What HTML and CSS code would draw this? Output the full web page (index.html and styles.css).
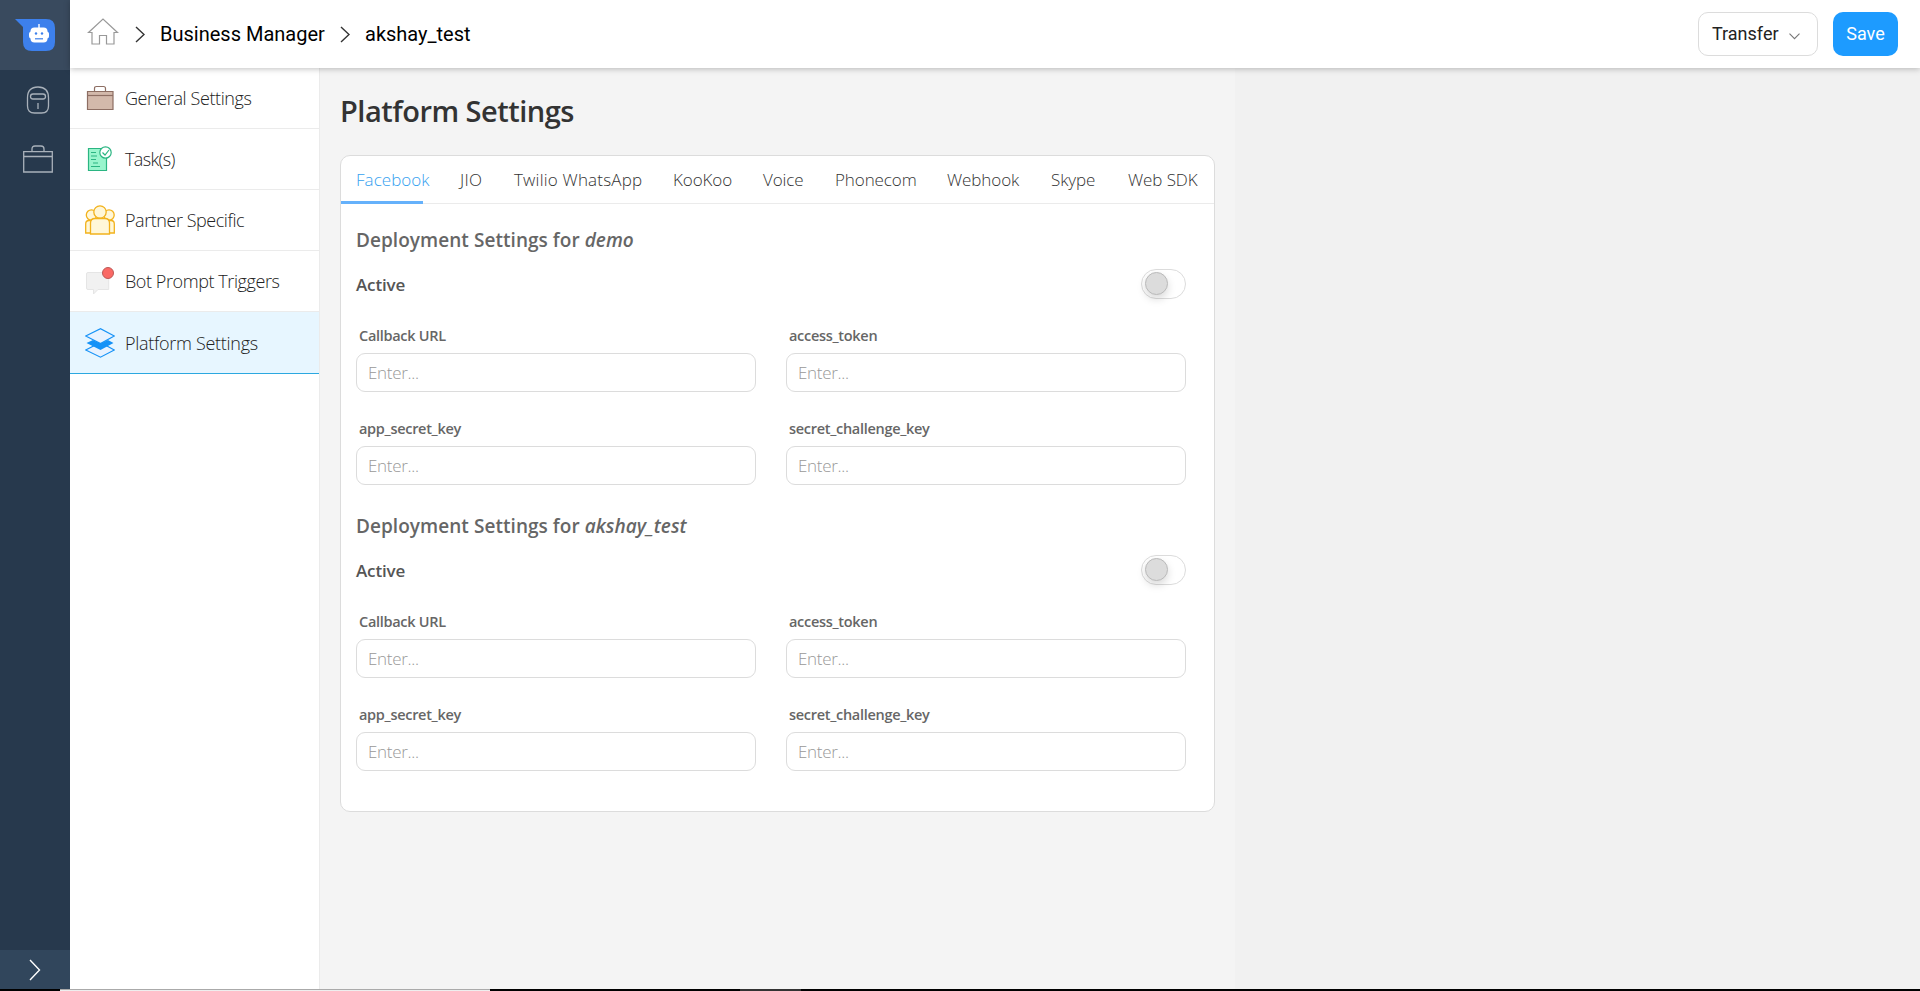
FILE: index.html
```html
<!DOCTYPE html>
<html lang="en">
<head>
<meta charset="utf-8">
<title>Platform Settings</title>
<link rel="stylesheet" href="styles.css">
</head>
<body>
<div class="app">
  <nav class="rail">
    <a class="rail-logo"><svg width="40" height="32" viewBox="0 0 40 32"><path d="M0 0H31Q40 0 40 9V23Q40 32 31 32H17Q8 32 8 23V8Z" fill="#3d80ec"/><path d="M24 5v4" stroke="#fff" stroke-width="1.4"/><rect x="15.500" y="8.500" width="17" height="15" rx="4" fill="#fff"/><rect x="14" y="12.500" width="20" height="7" rx="2.500" fill="#fff"/><circle cx="21" cy="14.500" r="1.200" fill="#3d80ec"/><circle cx="27" cy="14.500" r="1.200" fill="#3d80ec"/><path d="M20 19.800h8" stroke="#3d80ec" stroke-width="1.200"/></svg></a>
    <a class="rail-item rail-bot"><svg width="24" height="28" viewBox="0 0 24 28" fill="none" stroke="#a9b1ba" stroke-width="1.300"><path d="M1.500 12Q1.500 1 12 1T22.500 12V20Q22.500 27 15.500 27H8.500Q1.500 27 1.500 20Z"/><rect x="4.500" y="8" width="15" height="5" rx="2.500"/><path d="M12 17v6"/></svg></a>
    <a class="rail-item rail-case"><svg width="30" height="28" viewBox="0 0 30 28" fill="none" stroke="#a9b1ba" stroke-width="1.300"><path d="M.7 6.700H29.300V27H.7ZM.7 11.500H29.300M9 6.500V4Q9 1 12 1H18Q21 1 21 4V6.500"/></svg></a>
    <a class="rail-toggle"><svg width="12" height="22" viewBox="0 0 12 22" fill="none" stroke="#fff" stroke-width="1.400"><path d="M1 1L10.500 11L1 21"/></svg></a>
  </nav>
  <div class="workspace">
    <header class="topbar">
      <svg class="home" width="32" height="27" viewBox="0 0 32 27" fill="none" stroke="#999" stroke-width="1.200"><path d="M1.500 14.500L16 1L30.500 14.500H27V26H19.500V17.500H12.500V26H5V14.500Z"/></svg>
      <svg class="crumb-arrow" width="10" height="17" viewBox="0 0 10 17" fill="none" stroke="#333" stroke-width="1.400"><path d="M1 1L9 8.500L1 16"/></svg>
      <span class="crumb crumb-parent">Business Manager</span>
      <svg class="crumb-arrow" width="10" height="17" viewBox="0 0 10 17" fill="none" stroke="#333" stroke-width="1.400"><path d="M1 1L9 8.500L1 16"/></svg>
      <span class="crumb">akshay_test</span>
      <button class="btn btn-transfer">Transfer <svg width="11" height="7" viewBox="0 0 11 7" fill="none" stroke="#777" stroke-width="1.100"><path d="M.5 .7L5.500 5.700L10.500 .7"/></svg></button>
      <button class="btn btn-save">Save</button>
    </header>
    <div class="body">
      <aside class="menu">
        <a class="menu-item"><svg width="30" height="30" viewBox="0 0 30 30" fill="none" stroke="#8d6e63" stroke-width="1.200"><path d="M9.500 8V5.500Q9.500 3.500 11.500 3.500H18.500Q20.500 3.500 20.500 5.500V8"/><path d="M2.500 8.500H28V26.500H2.500Z" fill="#d3b9ab"/><path d="M2.500 12.500H28"/></svg><span class="label label-general">General Settings</span></a>
        <a class="menu-item"><svg width="30" height="30" viewBox="0 0 30 30" fill="none" stroke="#2bb582" stroke-width="1.200"><path d="M3.500 4.500H21.500V26.500H3.500Z" fill="#99f5cd"/><path d="M6 8.500h5M6 12h6M6 15.500h5M8 19h5M6 22.500h9"/><circle cx="20.500" cy="8.500" r="5.700" fill="#fff"/><path d="M17.500 8.500l2.500 2.500l4-5"/></svg><span class="label label-task">Task(s)</span></a>
        <a class="menu-item"><svg width="30" height="30" viewBox="0 0 30 30" fill="#fff7d8" stroke="#f2b21c" stroke-width="1.300"><circle cx="6.500" cy="10" r="5.200"/><circle cx="24" cy="10" r="5.200"/><path d="M.7 28V19Q.7 15.500 4 15.500H10V28ZM29.300 28V19Q29.300 15.500 26 15.500H20V28Z"/><circle cx="15" cy="7" r="6.200"/><path d="M5.500 29V18Q5.500 13.500 10 13.500H20Q24.500 13.500 24.500 18V29Z"/></svg><span class="label label-partner">Partner Specific</span></a>
        <a class="menu-item"><svg width="30" height="30" viewBox="0 0 30 30"><path d="M3 6.500H22Q23.700 6.500 23.700 8V23.500H13L8.500 28V23.500H3Q1.500 23.500 1.500 22V8Q1.500 6.500 3 6.500Z" fill="#f1f1f1" stroke="#e5e5e5"/><circle cx="23" cy="7" r="5.500" fill="#fa6965" stroke="#bd5956"/></svg><span class="label label-bot">Bot Prompt Triggers</span></a>
        <a class="menu-item menu-item-active"><svg width="30" height="30" viewBox="0 0 30 30" fill="none" stroke="#1592f7" stroke-width="1.200"><path d="M.7 22L15.500 14.500L29.300 22L15.500 29.200Z" fill="#e7f2ff"/><path d="M1.500 15L8 12L15.500 15.500L23 12L28.500 15L15.500 22Z" fill="#1592f7" stroke="none"/><path d="M.7 8L15.500 .7L29.300 8L15.500 15.500Z" fill="#e7f2ff"/></svg><span class="label label-platform">Platform Settings</span></a>
      </aside>
      <main class="content">
        <h1 class="title">Platform Settings</h1>
        <section class="card">
          <div class="tabs"><a class="tab tab-active">Facebook</a><a class="tab tab-wide">JIO</a><a class="tab tab-wide">Twilio WhatsApp</a><a class="tab">KooKoo</a><a class="tab">Voice</a><a class="tab">Phonecom</a><a class="tab">Webhook</a><a class="tab">Skype</a><a class="tab">Web SDK</a></div>
          <div class="deployment">
            <h2 class="heading">Deployment Settings for <em>demo</em></h2>
            <div class="active-row"><span>Active</span><span class="switch"><i class="knob"></i></span></div>
            <div class="fields">
              <label class="field"><span class="caption">Callback URL</span><input class="input" placeholder="Enter..."></label>
              <label class="field"><span class="caption">access_token</span><input class="input" placeholder="Enter..."></label>
              <label class="field"><span class="caption">app_secret_key</span><input class="input" placeholder="Enter..."></label>
              <label class="field"><span class="caption">secret_challenge_key</span><input class="input" placeholder="Enter..."></label>
            </div>
          </div>
          <div class="deployment">
            <h2 class="heading">Deployment Settings for <em>akshay_test</em></h2>
            <div class="active-row"><span>Active</span><span class="switch"><i class="knob"></i></span></div>
            <div class="fields">
              <label class="field"><span class="caption">Callback URL</span><input class="input" placeholder="Enter..."></label>
              <label class="field"><span class="caption">access_token</span><input class="input" placeholder="Enter..."></label>
              <label class="field"><span class="caption">app_secret_key</span><input class="input" placeholder="Enter..."></label>
              <label class="field"><span class="caption">secret_challenge_key</span><input class="input" placeholder="Enter..."></label>
            </div>
          </div>
        </section>
      </main>
    </div>
  </div>
</div>
<div class="bottom-edge"><i class="edge-start"></i><i class="edge-light"></i><i class="edge-dark"></i><i class="edge-gray"></i><i class="edge-end"></i></div>
</body>
</html>
```
FILE: styles.css
```css
* { box-sizing: border-box; }
body { margin: 0; height: 991px; overflow: hidden; font-family: "Open Sans", "Noto Sans", sans-serif; color: #333; }
svg { display: block; flex: none; }
.app { display: flex; height: 989px; }
.rail { width: 70px; flex: none; background: #27394d; display: flex; flex-direction: column; }
.rail-logo { height: 70px; background: #394a5e; padding: 19px 0 0 15px; }
.rail-bot { padding: 16px 0 0 26px; height: 75px; }
.rail-case { padding-left: 23px; }
.rail-toggle { margin-top: auto; height: 39px; background: #31465c; padding: 9px 0 0 29px; }
.workspace { flex: 1; min-width: 0; display: flex; flex-direction: column; }
.topbar { height: 68px; flex: none; display: flex; align-items: center; background: #fff; padding: 0 22px 0 17px; position: relative; z-index: 1; box-shadow: 0 1px 6px rgba(0,0,0,.25); font-family: Roboto, sans-serif; }
.home { margin: -5px 16px 0 0; }
.crumb-arrow { margin-right: 15px; }
.crumb { font-size: 20px; color: #000; white-space: nowrap; }
.crumb-parent { width: 165px; margin-right: 15px; }
.btn { font: 18px Roboto, sans-serif; height: 44px; border-radius: 10px; display: flex; align-items: center; }
.btn-transfer { margin-left: auto; width: 120px; background: #fff; border: 1px solid #dcdcdc; padding: 0 17px 2px 13px; justify-content: space-between; color: #222; }
.btn-transfer svg { margin-top: 7px; }
.btn-save { width: 65px; margin-left: 15px; border: 0; background: #1d9bff; color: #fff; justify-content: center; padding: 0 0 2px; }
.body { display: flex; flex: 1; background: #f1f1f1; }
.menu { width: 250px; background: #fff; border-right: 1px solid #ebebeb; }
.menu-item { height: 61px; border-bottom: 1px solid #ebebeb; padding-left: 15px; display: flex; align-items: center; gap: 10px; font-size: 18px; white-space: nowrap; }
.menu-item-active { height: 62px; background: #e7f6ff; border-color: #2ba8e0; }
.label { font-weight: 300; line-height: 24px; color: #222; }
.label-general { letter-spacing: -.4px; }
.label-task { letter-spacing: -.65px; }
.label-partner { letter-spacing: -.45px; }
.label-bot { letter-spacing: -.42px; }
.label-platform { letter-spacing: -.3px; }
.content { width: 915px; background: #f4f4f4; padding: 22px 20px 0 20px; }
.title { margin: 0; font-size: 29px; line-height: 42px; height: 65px; font-weight: 600; letter-spacing: -.5px; }
.card { width: 875px; height: 657px; background: #fff; border: 1px solid #dcdcdc; border-radius: 10px; }
.tabs { height: 48px; border-bottom: 1px solid #ebebeb; display: grid; grid-template-columns: 74px 24px 129px 60px 42px 82px 74px 47px 73px; gap: 30px; padding-left: 15px; position: relative; }
.tabs::after { content: ""; position: absolute; left: 0; bottom: -1px; width: 82px; height: 3px; background: #65b1fb; }
.tab { font-size: 17px; font-weight: 300; line-height: 47px; letter-spacing: -.1px; color: #333; white-space: nowrap; }
.tab-wide { letter-spacing: .2px; }
.tab-active { color: #36a1ef; letter-spacing: .05px; }
.deployment { height: 286px; padding: 22px 28px 0 15px; }
.heading { margin: 0; font-size: 19px; line-height: 28px; font-weight: 600; letter-spacing: .05px; color: #666; }
.active-row { display: flex; justify-content: space-between; height: 30px; margin-top: 15px; align-items: center; font-size: 17px; font-weight: 600; letter-spacing: -.15px; color: #555; }
.switch { width: 45px; height: 30px; border: 1px solid #dcdcdc; border-radius: 15px; padding: 2px 3px; }
.knob { display: block; width: 23px; height: 23px; border: 1px solid #bababa; border-radius: 50%; background: #dcdcdc; box-shadow: 0 4px 8px rgba(0,0,0,.15); }
.fields { display: grid; grid-template-columns: 400px 400px; gap: 25px 30px; margin-top: 25px; }
.field { display: block; height: 68px; }
.caption { display: block; height: 29px; padding-left: 3px; font-size: 14.5px; line-height: 24px; font-weight: 600; letter-spacing: -.3px; color: #666; }
.input { display: block; width: 400px; height: 39px; border: 1px solid #dcdcdc; border-radius: 9px; padding: 0 11px; font: 300 17px "Open Sans", sans-serif; letter-spacing: -.3px; }
.input::placeholder { color: #999; }
.bottom-edge { height: 2px; display: flex; background: #000; }
.edge-start { width: 60px; }
.edge-light { width: 430px; background: #eee; border-top: 1px solid #aaa; }
.edge-dark { width: 250px; }
.edge-gray { width: 61px; background: #333; }
```
